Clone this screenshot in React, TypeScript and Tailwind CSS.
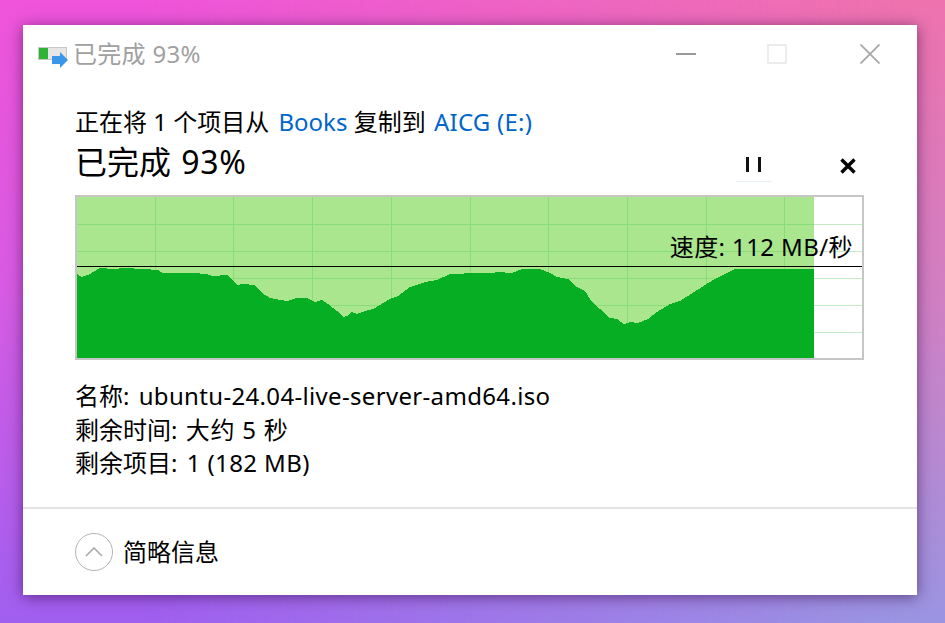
const samples: [number, number][] = [
  [77, 274], [82, 277], [90, 274], [100, 268], [113, 269], [125, 268], [143, 269], [158, 270], [163, 273],
  [187, 273], [193, 273], [207, 274], [212, 276], [227, 275], [230, 277], [237, 285], [243, 284], [254, 285],
  [262, 293], [270, 298], [287, 301], [297, 298], [307, 298], [315, 302], [322, 300], [328, 304], [337, 311],
  [343, 317], [347, 316], [352, 312], [357, 314], [365, 311], [373, 309], [390, 299], [398, 296], [410, 287],
  [425, 282], [437, 280], [450, 274], [477, 273], [493, 273], [497, 272], [512, 273], [522, 269], [540, 269],
  [550, 273], [557, 277], [568, 279], [577, 287], [585, 291], [592, 302], [597, 307], [600, 309], [610, 318],
  [617, 319], [624, 324], [630, 322], [638, 323], [648, 319], [657, 312], [670, 304], [680, 301], [705, 285],
  [713, 280], [735, 269], [813, 269],
];

const columns = [155, 233, 312, 391, 470, 548, 627, 706, 784];
const rows = [224, 251, 278, 305, 332];

function SpeedChart() {
  const area = samples.map(([x, y]) => `${x - 77},${y - 197}`).join(" ");
  return (
    <div className="relative h-[165px] w-[789px] border-2 border-[#c6c6c6] bg-white">
      <svg width="785" height="161" viewBox="0 0 785 161" className="block" shapeRendering="crispEdges">
        <rect x="0" y="0" width="737" height="161" fill="#a9e68e" />
        {rows.map((y) => (
          <g key={y}>
            <rect x="0" y={y - 197} width="737" height="1" fill="#88dd78" />
            <rect x="737" y={y - 197} width="48" height="1" fill="#c4edc7" />
          </g>
        ))}
        {columns.map((x) => (
          <rect key={x} x={x - 77} y="0" width="1" height="161" fill="#88dd78" />
        ))}
        <polygon points={`0,161 ${area} 737,72 737,161`} fill="#06ae24" />
        <rect x="0" y="69" width="785" height="1" fill="#000" />
      </svg>
      <span className="absolute right-[9px] top-[34px] text-[24px] leading-[32px] tracking-[0.4px] text-black">速度: 112 MB/秒</span>
    </div>
  );
}

function CopyIcon() {
  return (
    <svg width="32" height="24" viewBox="0 0 32 24" className="shrink-0">
      <rect x="0.5" y="0.5" width="28" height="12" fill="#e6e6e6" stroke="#c8c8c8" />
      <rect x="1" y="1" width="9" height="11" fill="#2eb335" />
      <path d="M14 9h8V5l8 8-8 8v-4h-8z" fill="#3a96e6" />
    </svg>
  );
}

export default function App() {
  return (
    <div className="relative h-[623px] w-[945px] overflow-hidden pl-[23px] pt-[25px] font-['Noto_Sans','Noto_Sans_CJK_SC',sans-serif]">
      <div className="absolute inset-0 bg-[linear-gradient(to_bottom,#ef54da_0%,#d85be2_45%,#a05ff0_100%)]" />
      <div className="absolute inset-0 bg-[linear-gradient(to_bottom,#ee72ae_0%,#cf80c4_50%,#9a94e2_100%)] [mask-image:linear-gradient(to_right,transparent_15%,black_95%)]" />

      <div className="relative flex h-[570px] w-[894px] flex-col bg-white text-black shadow-[0_2px_14px_rgba(40,0,60,0.55)]">
        <div className="flex h-[58px] items-center pl-[15px]">
          <div className="mt-[9px]">
            <CopyIcon />
          </div>
          <span className="ml-[3px] text-[24px] leading-[32px] tracking-[0.3px] text-[#a0a0a0]">已完成 93%</span>
          <div className="ml-auto flex items-center pr-[37px]">
            <div className="h-[2px] w-[20px] bg-[#999999]" />
            <div className="ml-[71px] h-[20px] w-[20px] border-2 border-[#ececec]" />
            <svg width="20" height="20" viewBox="0 0 20 20" className="ml-[73px]">
              <path d="M0.5 0.5l19 19M19.5 0.5l-19 19" stroke="#a8a8a8" strokeWidth="1.8" fill="none" />
            </svg>
          </div>
        </div>

        <div className="flex flex-1 flex-col pl-[52px]">
          <p className="mt-[23px] text-[24px] leading-[32px]">
            正在将 1 个项目从 <span className="ml-[3px] text-[#0066cc]">Books</span> 复制到{" "}
            <span className="ml-[2px] tracking-[0.25px] text-[#0066cc]">AICG (E:)</span>
          </p>
          <div className="mt-[2px] flex h-[55px] items-start">
            <span className="text-[32px] leading-[44px]">
              已完成 <span className="ml-[2px] tracking-[0.6px]">93%</span>
            </span>
            <div className="ml-auto mt-[10px] flex pr-[61px]">
              <div className="flex h-[32px] w-[35px] items-start justify-center gap-[9px] border-b border-[#e4f0f8] pt-[7px]">
                <div className="h-[15px] w-[3px] bg-[#111111]" />
                <div className="h-[15px] w-[3px] bg-[#111111]" />
              </div>
              <svg width="16" height="16" viewBox="0 0 16 16" className="ml-[69px] mt-[8px]">
                <path d="M1.5 1.5l13 13M14.5 1.5l-13 13" stroke="#000" strokeWidth="3.4" fill="none" />
              </svg>
            </div>
          </div>

          <SpeedChart />

          <div className="mt-[19px] flex flex-col text-[24px] leading-[33.5px]">
            <p>
              名称: <span className="ml-[3px] tracking-[0.33px]">ubuntu-24.04-live-server-amd64.iso</span>
            </p>
            <p>
              剩余时间: <span className="ml-[2px] tracking-[0.75px]">大约 5 秒</span>
            </p>
            <p>
              剩余项目: <span className="ml-[3px] tracking-[0.4px]">1 (182 MB)</span>
            </p>
          </div>
        </div>

        <div className="flex h-[88px] items-center gap-[10px] border-t-2 border-[#e3e3e3] pl-[52px]">
          <div className="flex h-[38px] w-[38px] items-center justify-center rounded-full border border-[#b4b4b4]">
            <svg width="18" height="10" viewBox="0 0 18 10">
              <path d="M1 9l8-8 8 8" stroke="#a8a8a8" strokeWidth="1.6" fill="none" />
            </svg>
          </div>
          <span className="text-[24px] leading-[32px]">简略信息</span>
        </div>
      </div>
    </div>
  );
}
